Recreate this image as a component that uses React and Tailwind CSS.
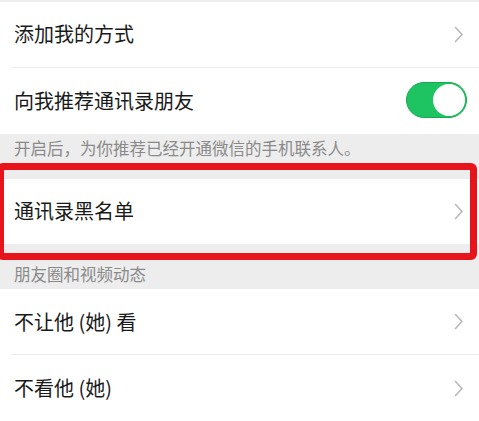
import React from "react";

const Chevron = () => (
  <svg width="10" height="17" viewBox="0 0 10 17" className="shrink-0">
    <path d="M1.5 1.5 L8 8.5 L1.5 15.5" fill="none" stroke="#b8b8b8" strokeWidth="1.6" strokeLinecap="round" strokeLinejoin="round" />
  </svg>
);

const Row = ({ label, right, divider }) => (
  <div className="h-[66px] bg-white flex flex-col">
    <div className="flex-1 flex items-center pl-[14px] pr-[15px]">
      <span className="flex-1 text-[20px] text-[#1a1a1a] leading-none">{label}</span>
      {right}
    </div>
    {divider && <div className="ml-[11px] h-px bg-[#ececec]" />}
  </div>
);

const Toggle = () => (
  <div className="w-[61px] h-[36px] rounded-full bg-[#1fc462] border border-[#17a852] flex items-center justify-end pr-[1px]">
    <div className="w-[32px] h-[32px] rounded-full bg-white" />
  </div>
);

export default function App() {
  return (
    <div
      className="relative w-[479px] h-[421px] overflow-hidden bg-[#ededed] flex flex-col"
      style={{ fontFamily: '"Noto Sans CJK SC", "Noto Sans", sans-serif' }}
    >
      <div className="h-[2px] shrink-0" />
      <Row label="添加我的方式" right={<Chevron />} divider />
      <Row label="向我推荐通讯录朋友" right={<div className="-mr-[3px] -mt-[2px]"><Toggle /></div>} />
      <div className="h-[45px] shrink-0 pl-[14px] pt-[4px] text-[16.5px] text-[#8a8a8a] leading-[20px]">
        开启后，为你推荐已经开通微信的手机联系人。
      </div>
      <Row label="通讯录黑名单" right={<Chevron />} />
      <div className="h-[45px] shrink-0 pl-[14px] pt-[20px] text-[16.5px] text-[#8a8a8a] leading-[20px]">
        朋友圈和视频动态
      </div>
      <Row label="不让他 (她) 看" right={<Chevron />} divider />
      <Row label="不看他 (她)" right={<Chevron />} />
      <div className="absolute left-[-3px] top-[163px] w-[480px] h-[97px] border-[7px] border-[#e8141c] rounded-[6px]" />
    </div>
  );
}
